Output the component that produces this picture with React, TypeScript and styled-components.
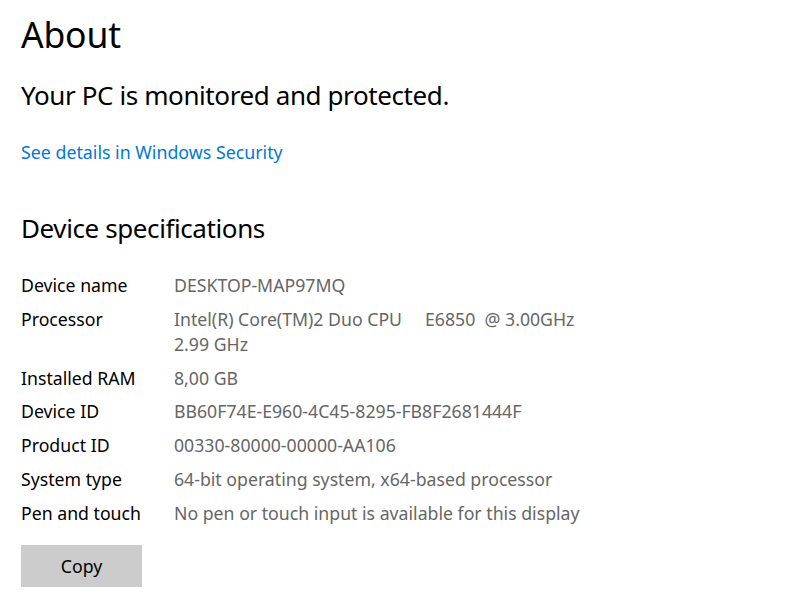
import styled, { createGlobalStyle } from "styled-components";

const GlobalStyle = createGlobalStyle`
  html, body {
    margin: 0;
    padding: 0;
    background: #ffffff;
  }
  body {
    font-family: "Noto Sans", "Open Sans", sans-serif;
    color: #000000;
  }
`;

const Page = styled.div`
  width: 800px;
  height: 616px;
  box-sizing: border-box;
  padding: 9px 0 0 21px;
  display: flex;
  flex-direction: column;
  overflow: hidden;
`;

const Title = styled.h1`
  margin: 0;
  font-size: 35.5px;
  font-weight: 400;
  line-height: 50px;
  letter-spacing: -0.2px;
`;

const Subtitle = styled.h2<{ $top: number }>`
  margin: ${({ $top }) => $top}px 0 0 0;
  font-size: 26px;
  font-weight: 400;
  line-height: 36px;
  letter-spacing: -0.4px;
`;

const Link = styled.a`
  margin-top: 27px;
  font-size: 17.8px;
  line-height: 24px;
  color: #0078d7;
  text-decoration: none;
  cursor: pointer;
`;

const SpecTable = styled.div`
  margin-top: 27px;
  display: grid;
  grid-template-columns: 153px 1fr;
  row-gap: 8.8px;
`;

const Label = styled.div`
  font-size: 17.7px;
  line-height: 25px;
  color: #000000;
`;

const Value = styled.div`
  font-size: 17.7px;
  line-height: 25px;
  color: #666666;
  white-space: pre;
`;

const CopyButton = styled.button`
  margin-top: 19px;
  width: 121px;
  height: 42px;
  border: none;
  background: #cccccc;
  font-family: inherit;
  font-size: 17.7px;
  color: #000000;
  cursor: pointer;
  padding: 0;
`;

const specs: [string, string][] = [
  ["Device name", "DESKTOP-MAP97MQ"],
  ["Processor", "Intel(R) Core(TM)2 Duo CPU     E6850  @ 3.00GHz\n2.99 GHz"],
  ["Installed RAM", "8,00 GB"],
  ["Device ID", "BB60F74E-E960-4C45-8295-FB8F2681444F"],
  ["Product ID", "00330-80000-00000-AA106"],
  ["System type", "64-bit operating system, x64-based processor"],
  ["Pen and touch", "No pen or touch input is available for this display"],
];

export default function App() {
  return (
    <>
      <GlobalStyle />
      <Page>
        <Title>About</Title>
        <Subtitle $top={18}>Your PC is monitored and protected.</Subtitle>
        <Link>See details in Windows Security</Link>
        <Subtitle $top={46}>Device specifications</Subtitle>
        <SpecTable>
          {specs.map(([label, value]) => (
            <>
              <Label key={label}>{label}</Label>
              <Value key={label + "-v"}>{value}</Value>
            </>
          ))}
        </SpecTable>
        <div>
          <CopyButton>Copy</CopyButton>
        </div>
      </Page>
    </>
  );
}
